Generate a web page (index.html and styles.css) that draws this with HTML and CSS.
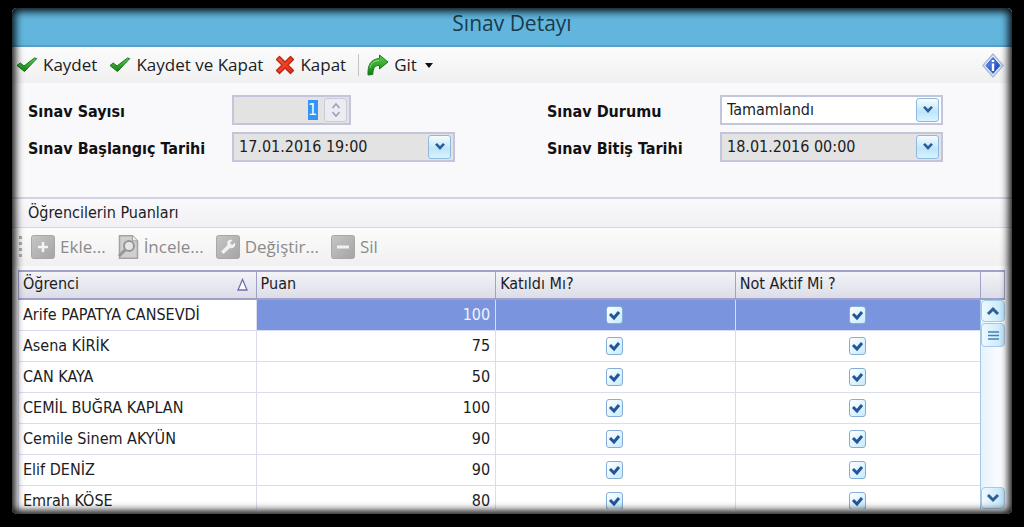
FILE: index.html
```html
<!DOCTYPE html>
<html lang="tr">
<head>
<meta charset="utf-8">
<title>Sınav Detayı</title>
<link rel="stylesheet" href="styles.css">
</head>
<body>
<svg class="defs" aria-hidden="true">
  <defs>
    <linearGradient id="green" x1="0" y1="0" x2="0" y2="1"><stop offset="0" stop-color="#5fd04c"/><stop offset="1" stop-color="#0e7d12"/></linearGradient>
    <linearGradient id="red" x1="0" y1="0" x2="1" y2="1"><stop offset="0" stop-color="#f8573c"/><stop offset="1" stop-color="#e22a10"/></linearGradient>
    <linearGradient id="blue" x1="0" y1="0" x2="1" y2="1"><stop offset="0" stop-color="#6fa0ee"/><stop offset="1" stop-color="#0a2fb4"/></linearGradient>
    <linearGradient id="gray" x1="0" y1="0" x2="1" y2="1"><stop offset="0" stop-color="#c6c6c6"/><stop offset="1" stop-color="#a4a4a4"/></linearGradient>
    <symbol id="check" viewBox="0 0 22 16"><path d="M1 8.500 4.300 6l3.700 3L18.500 1l2.200.6L8.500 14.600z" fill="url(#green)" stroke="#16731b" stroke-width="1" stroke-linejoin="round"/></symbol>
    <symbol id="chevron" viewBox="0 0 12 10"><path d="M1 2.500 3 1l3 3 3-3 2 1.500L6 8z" fill="#2c5d9d"/></symbol>
  </defs>
</svg>
<div class="window">
  <header class="title-bar"><h1>Sınav Detayı</h1></header>
  <div class="toolbar">
    <button type="button"><svg width="22" height="16"><use href="#check"/></svg>Kaydet</button>
    <button type="button"><svg width="22" height="16"><use href="#check"/></svg>Kaydet ve Kapat</button>
    <button type="button"><svg width="20" height="20" viewBox="0 0 20 20"><path d="M4.500 1.500 10 7l5.500-5.500 3 3L13 10l5.500 5.500-3 3L10 13l-5.500 5.500-3-3L7 10 1.500 4.500z" fill="url(#red)" stroke="#bb2415" stroke-width="1.300" stroke-linejoin="round"/></svg>Kapat</button>
    <span class="divider"></span>
    <button type="button"><svg width="22" height="22" viewBox="0 0 22 22"><path d="M12.500 1 21 8l-8.500 7v-3.500C8 11 6 14 5.800 20.500L1 21C.5 11 4 5 12.500 4.500z" fill="url(#green)" stroke="#197a1c" stroke-linejoin="round"/><path d="M3 14c1-5 4-7.500 9-7.500" fill="none" stroke="#8be37a"/></svg>Git<svg class="caret" width="8" height="5" viewBox="0 0 8 5"><path d="M0 0h8L4 5z" fill="#111"/></svg></button>
    <button type="button" class="info" aria-label="Bilgi"><svg width="22" height="25" viewBox="0 0 22 25"><path d="M11 1 21 12.500 11 24 1 12.500z" fill="#e4ebf7" stroke="#a9bce0" stroke-width="1.500" stroke-linejoin="round"/><path d="M11 4.500 18 12.500 11 20.500 4 12.500z" fill="url(#blue)" stroke="#3c63bf"/><path d="M11 7v2M11 10.500V18" stroke="#fff" stroke-width="2.400"/></svg></button>
  </div>
  <form class="details">
    <label for="count">Sınav Sayısı</label>
    <div class="field short readonly"><input id="count" class="number" value="1" readonly>
      <button type="button" class="spin" aria-label="Artır veya azalt" disabled><svg width="10" height="16" viewBox="0 0 10 16"><path d="M1.500 6 5 2l3.500 4M1.500 10 5 14l3.500-4" fill="none" stroke="#9da0b9" stroke-width="1.600"/></svg></button></div>
    <label for="status">Sınav Durumu</label>
    <div class="field"><select id="status"><option>Tamamlandı</option></select>
      <span class="drop" aria-hidden="true"><svg width="12" height="10"><use href="#chevron"/></svg></span></div>
    <label for="start">Sınav Başlangıç Tarihi</label>
    <div class="field readonly"><input id="start" value="17.01.2016 19:00" readonly>
      <button type="button" class="drop" aria-label="Başlangıç tarihi seç"><svg width="12" height="10"><use href="#chevron"/></svg></button></div>
    <label for="end">Sınav Bitiş Tarihi</label>
    <div class="field readonly"><input id="end" value="18.01.2016 00:00" readonly>
      <button type="button" class="drop" aria-label="Bitiş tarihi seç"><svg width="12" height="10"><use href="#chevron"/></svg></button></div>
  </form>
  <h2 class="group-title">Öğrencilerin Puanları</h2>
  <div class="toolbar list-tools">
    <span class="grip"></span>
    <button type="button" disabled><svg width="24" height="24" viewBox="0 0 24 24"><rect x=".5" y=".5" width="23" height="23" rx="2" fill="url(#gray)" stroke="#a8a8a8"/><path d="M12 7v10M7 12h10" stroke="#f4f4f4" stroke-width="2.500"/></svg>Ekle...</button>
    <button type="button" disabled><svg width="21" height="24" viewBox="0 0 21 24"><path d="M1.500.8h13l5 5v17.400h-18z" fill="#d0d0d0" stroke="#a3a3a3" stroke-width="1.500"/><path d="M14.500.8v5h5" fill="#eee" stroke="#a3a3a3"/><circle cx="11" cy="11" r="5" fill="#e6e6e6" stroke="#969696" stroke-width="2"/><path d="M7.500 14.500 1 21" stroke="#969696" stroke-width="3"/></svg>İncele...</button>
    <button type="button" disabled><svg width="24" height="24" viewBox="0 0 24 24"><rect x=".5" y=".5" width="23" height="23" rx="2" fill="url(#gray)" stroke="#a8a8a8"/><path d="M19 7.500 16 10l-2-2 2.500-3c-4-1-6 1.500-5 5L5 16.500 7.500 19l6.500-6c3.500 1 6-1.500 5-5.500z" fill="#f1f1f1"/></svg>Değiştir...</button>
    <button type="button" disabled><svg width="24" height="24" viewBox="0 0 24 24"><rect x=".5" y=".5" width="23" height="23" rx="2" fill="url(#gray)" stroke="#a8a8a8"/><path d="M6 12h12" stroke="#f1f1f1" stroke-width="3"/></svg>Sil</button>
  </div>
  <div class="grid">
    <div class="rows">
      <table>
        <colgroup><col class="name"><col class="score"><col class="joined"><col></colgroup>
        <thead><tr>
          <th scope="col"><div class="sorted">Öğrenci<svg width="11" height="13" viewBox="0 0 11 13"><path d="M5.500 1.500 10 12H1z" fill="#fff" stroke="#6d6fae" stroke-width="1.300"/></svg></div></th>
          <th scope="col">Puan</th><th scope="col">Katıldı Mı?</th><th scope="col">Not Aktif Mi ?</th>
        </tr></thead>
        <tbody>
          <tr class="selected"><td>Arife PAPATYA CANSEVDİ</td><td>100</td><td><input type="checkbox" aria-label="Katıldı" checked></td><td><input type="checkbox" aria-label="Not aktif" checked></td></tr>
          <tr><td>Asena KİRİK</td><td>75</td><td><input type="checkbox" aria-label="Katıldı" checked></td><td><input type="checkbox" aria-label="Not aktif" checked></td></tr>
          <tr><td>CAN KAYA</td><td>50</td><td><input type="checkbox" aria-label="Katıldı" checked></td><td><input type="checkbox" aria-label="Not aktif" checked></td></tr>
          <tr><td>CEMİL BUĞRA KAPLAN</td><td>100</td><td><input type="checkbox" aria-label="Katıldı" checked></td><td><input type="checkbox" aria-label="Not aktif" checked></td></tr>
          <tr><td>Cemile Sinem AKYÜN</td><td>90</td><td><input type="checkbox" aria-label="Katıldı" checked></td><td><input type="checkbox" aria-label="Not aktif" checked></td></tr>
          <tr><td>Elif DENİZ</td><td>90</td><td><input type="checkbox" aria-label="Katıldı" checked></td><td><input type="checkbox" aria-label="Not aktif" checked></td></tr>
          <tr><td>Emrah KÖSE</td><td>80</td><td><input type="checkbox" aria-label="Katıldı" checked></td><td><input type="checkbox" aria-label="Not aktif" checked></td></tr>
        </tbody>
      </table>
    </div>
    <div class="side">
      <div class="corner"></div>
      <div class="scrollbar">
        <button type="button" aria-label="Yukarı"><svg width="14" height="10" viewBox="0 0 14 10"><path d="M2 8l5-5 5 5" fill="none" stroke="#2c6095" stroke-width="3"/></svg></button>
        <div class="thumb"><svg width="11" height="9" viewBox="0 0 11 9"><path d="M0 1h11M0 4.500h11M0 8h11" stroke="#4a7fb5" stroke-width="1.500"/></svg></div>
        <button type="button" class="down" aria-label="Aşağı"><svg width="14" height="10" viewBox="0 0 14 10"><path d="M2 2l5 5 5-5" fill="none" stroke="#2c6095" stroke-width="3"/></svg></button>
      </div>
    </div>
  </div>
</div>
</body>
</html>
```
FILE: styles.css
```css
* { box-sizing: border-box; }
body {
  margin: 0;
  padding: 8px 12px 13px;
  height: 100vh;
  background: #000;
  color: #1c1c24;
  font: 16px/20px "DejaVu Sans Condensed", "DejaVu Sans", sans-serif;
}
.defs { position: absolute; width: 0; height: 0; }
button, input, select { font: inherit; color: inherit; }
button { border: 0; padding: 0; background: none; }
svg { display: block; flex: none; }

.window {
  position: relative;
  display: flex;
  flex-direction: column;
  height: 100%;
  overflow: hidden;
  border-radius: 5px;
  background: #f9f9fc;
}
.window::after {
  content: "";
  position: absolute;
  inset: 0;
  box-shadow: inset 0 0 8px 3px #000;
  pointer-events: none;
}
.title-bar {
  flex: none;
  height: 39px;
  background: #62b6de;
  border-bottom: 2px solid #579fc4;
  text-align: center;
}
.title-bar h1 {
  margin: 0;
  font: 21px/30px "Open Sans", "Noto Sans", sans-serif;
  color: #1b3a4b;
}
.toolbar {
  flex: none;
  display: flex;
  align-items: center;
  height: 36px;
  gap: 12px;
  padding: 0 8px 0 4px;
  background: linear-gradient(#fcfcfc, #f0f0f0);
  font: 17px/24px "Open Sans", "Noto Sans", sans-serif;
}
.toolbar button { display: flex; align-items: center; gap: 5px; white-space: nowrap; }
.toolbar .caret { margin-left: 3px; }
.toolbar .info { margin-left: auto; }
.divider { width: 1px; height: 22px; background: #c4c4c8; margin-right: -4px; }

.details {
  flex: none;
  display: grid;
  grid-template-columns: 204px 1fr 173px 223px;
  row-gap: 7px;
  padding: 12px 69px 35px 16px;
  align-items: center;
}
.details label { padding-top: 3px; font-weight: bold; color: #111; }
.field {
  display: flex;
  align-items: center;
  height: 30px;
  width: 223px;
  padding: 2px;
  background: #fff;
  border: 2px solid #c3c6da;
}
.field.readonly { background: #e3e3e3; }
.field.short { width: 119px; justify-content: flex-end; }
.field input, .field select {
  flex: 1;
  min-width: 0;
  border: 0;
  padding: 0 3px;
  outline: 0;
  background: none;
  appearance: none;
}
.field .number { flex: none; width: 10px; height: 20px; padding: 0; margin-right: 6px; background: #3295f5; color: #fff; }
.drop, .spin {
  display: flex;
  align-items: center;
  justify-content: center;
  width: 23px;
  height: 24px;
  flex: none;
  border-radius: 3px;
}
.details .drop { border: 1px solid #8fb8df; background: linear-gradient(#f5fcff, #bfe5fa 60%, #d9f5ff); }
.details .spin { border: 1px solid #c9cbdc; background: #ebebf2; }

.group-title {
  flex: none;
  margin: 0;
  padding: 0 16px;
  font: inherit;
  line-height: 28px;
  border-top: 2px solid #d3d4e3;
  border-bottom: 1px solid #d3d4e3;
  background: linear-gradient(#fafafc, #f0f0f5);
}
.list-tools { height: 38px; padding-left: 7px; color: #8b8b8b; }
.list-tools button { color: inherit; }
.grip { width: 3px; height: 22px; margin-right: -3px; background: repeating-linear-gradient(#aaa 0 3px, transparent 3px 6px); }

.grid { flex: 1; min-height: 0; display: flex; margin: 4px 7px 5px 6px; background: #fff; }
.rows { flex: 1; min-width: 0; overflow: hidden; }
table { width: 100%; table-layout: fixed; border-collapse: separate; border-spacing: 0; }
.name { width: 24.7%; }
.score, .joined { width: 24.9%; }
th {
  height: 30px;
  padding: 0 5px 2px 4px;
  font-weight: normal;
  text-align: left;
  border: 2px solid #9fa1cb;
  border-width: 2px 0 2px 1px;
  background: linear-gradient(#f3f3f8, #dcdde8);
}
.sorted { display: flex; align-items: center; justify-content: space-between; padding-right: 3px; }
td { height: 31px; padding: 0 5px 0 4px; border: solid #dcdcef; border-width: 0 0 1px 1px; }
td:nth-child(2) { text-align: right; }
.selected td:nth-child(n+2) { background: #7a95de; color: #f0f3ff; }
td input {
  appearance: none;
  display: block;
  width: 17px;
  height: 18px;
  margin: 0 auto;
  border: 1px solid #84add8;
  border-radius: 3px;
  background: linear-gradient(135deg, #fff, #c5ebfc);
}
td input:checked {
  background: url("data:image/svg+xml,%3Csvg xmlns='http://www.w3.org/2000/svg' viewBox='0 0 15 16'%3E%3Cpath d='M3 7l4 4 5-6' fill='none' stroke='%2323559b' stroke-width='3'/%3E%3C/svg%3E") center / 100% no-repeat, linear-gradient(135deg, #fff, #c5ebfc);
}
.side { flex: none; width: 25px; display: flex; flex-direction: column; }
.corner { height: 30px; border: 2px solid #9fa1cb; border-width: 2px 1px; background: linear-gradient(#f3f3f8, #dcdde8); }
.scrollbar {
  flex: 1;
  display: flex;
  flex-direction: column;
  border-left: 1px solid #a6c5e4;
  background: linear-gradient(90deg, #e6f3fb, #fff);
}
.scrollbar button, .thumb {
  display: flex;
  align-items: center;
  justify-content: center;
  height: 22px;
  border: 1px solid #a5c9e8;
  border-radius: 4px;
  background: linear-gradient(90deg, #edfaff, #c3e6fa);
}
.scrollbar .thumb { height: 24px; margin-top: 1px; }
.scrollbar .down { margin-top: auto; }
```
